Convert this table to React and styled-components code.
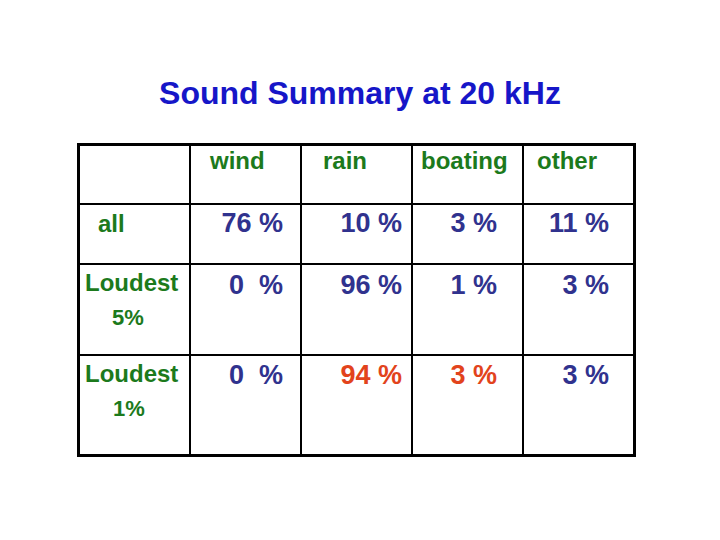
import React from 'react'
import styled, { createGlobalStyle } from 'styled-components'

const GlobalStyle = createGlobalStyle`
  html, body {
    margin: 0;
    padding: 0;
    background: #ffffff;
  }
  body {
    width: 720px;
    height: 540px;
    overflow: hidden;
    font-family: "Liberation Sans", Arial, sans-serif;
  }
`

const columns = [
  { name: 'wind', indent: 19, pad: 17 },
  { name: 'rain', indent: 21, pad: 9 },
  { name: 'boating', indent: 8, pad: 25 },
  { name: 'other', indent: 13, pad: 24 },
]

const rows = [
  { label: [{ text: 'all', indent: 18 }], labelTop: 5, valueTop: 3, values: [['76 %'], ['10 %'], ['3 %'], ['11 %']] },
  {
    label: [{ text: 'Loudest', indent: 5 }, { text: '5%', indent: 32 }],
    labelTop: 4,
    valueTop: 5,
    values: [['0  %'], ['96 %'], ['1 %'], ['3 %']],
  },
  {
    label: [{ text: 'Loudest', indent: 5 }, { text: '1%', indent: 33 }],
    labelTop: 4,
    valueTop: 4,
    values: [['0  %'], ['94 %', 'hot'], ['3 %', 'hot'], ['3 %']],
  },
]

const Slide = () => {
  return (
    <Page>
      <GlobalStyle />
      <Title>Sound Summary at 20 kHz</Title>
      <Table>
        <HeadCell $indent={0} />
        {columns.map((c) => (
          <HeadCell key={c.name} $indent={c.indent}>{c.name}</HeadCell>
        ))}
        {rows.map((r, i) => (
          <React.Fragment key={i}>
            <LabelCell $top={r.labelTop}>
              {r.label.map((l) => (
                <LabelLine key={l.text} $indent={l.indent}>{l.text}</LabelLine>
              ))}
            </LabelCell>
            {r.values.map(([v, tone], j) => (
              <ValueCell key={j} $top={r.valueTop} $pad={columns[j].pad} $hot={tone === 'hot'}>
                {v}
              </ValueCell>
            ))}
          </React.Fragment>
        ))}
      </Table>
    </Page>
  )
}

const Page = styled.div`
  width: 720px;
  height: 540px;
  padding-top: 75px;
  box-sizing: border-box;
`

const Title = styled.h1`
  margin: 0;
  text-align: center;
  font-size: 32px;
  font-weight: bold;
  line-height: 37px;
  color: #1616c8;
`

const Table = styled.div`
  margin: 31px 0 0 77px;
  width: 559px;
  display: grid;
  grid-template-columns: repeat(5, 109px);
  grid-template-rows: 57px 58px 89px 98px;
  gap: 2px;
  padding: 3px;
  box-sizing: border-box;
  background: #000000;
`

const Cell = styled.div`
  background: #ffffff;
  box-sizing: border-box;
`

const HeadCell = styled(Cell)`
  padding: 1px 0 0 ${(p) => p.$indent}px;
  font-size: 24px;
  font-weight: bold;
  color: #1c7a1c;
`

const LabelCell = styled(Cell)`
  padding-top: ${(p) => p.$top}px;
  font-size: 24px;
  font-weight: bold;
  color: #1c7a1c;
`

const LabelLine = styled.div`
  padding-left: ${(p) => p.$indent}px;
  line-height: 28px;
  & + & {
    margin-top: 7px;
    font-size: 22px;
  }
`

const ValueCell = styled(Cell)`
  padding: ${(p) => p.$top}px ${(p) => p.$pad}px 0 0;
  text-align: right;
  white-space: pre;
  font-size: 27px;
  font-weight: bold;
  color: ${(p) => (p.$hot ? '#e2431c' : '#30328e')};
`

export default Slide
